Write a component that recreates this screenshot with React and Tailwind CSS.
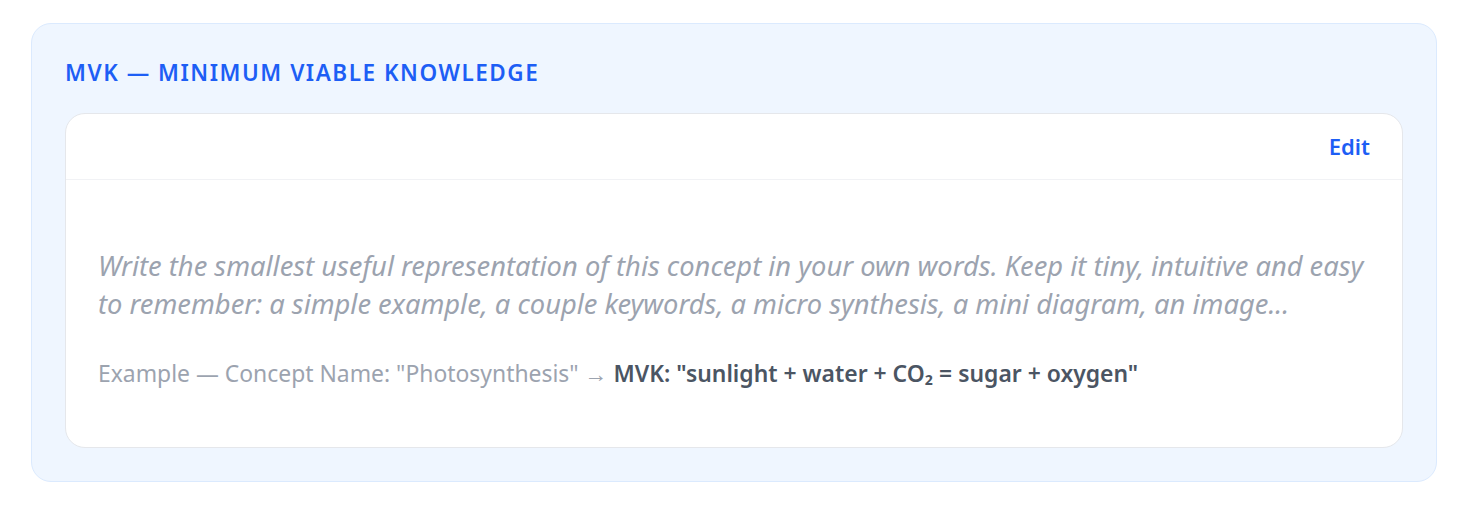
export default function App() {
  return (
    <div className="min-h-screen bg-white pl-[31px] pr-[29px] pt-[23px]" style={{ fontFamily: '"Noto Sans", "Open Sans", sans-serif' }}>
      <div className="rounded-[20px] border border-[#dbeafe] bg-[#eff6ff] px-[33px] pt-[32px] pb-[33px]">
        <h2 className="mb-[24px] text-[22.5px] font-semibold uppercase leading-[33px] tracking-[0.068em] text-[#1d5ef5]">
          MVK — Minimum Viable Knowledge
        </h2>
        <div className="rounded-[20px] border border-[#e5e7eb] bg-white">
          <div className="flex h-[66px] items-center justify-end border-b border-[#f1f2f5] px-[32px]">
            <button className="text-[22px] font-semibold text-[#1d5ef5]">Edit</button>
          </div>
          <div className="px-[32px] pt-[67px] pb-[58px]">
            <p className="text-[27.3px] italic leading-[38px] text-[#9ca3af]">
              Write the smallest useful representation of this concept in your own words. Keep it tiny, intuitive and easy to remember: a simple example, a couple keywords, a micro synthesis, a mini diagram, an image...
            </p>
            <p className="mt-[36px] text-[22.9px] leading-[30px] text-[#9ca3af]">
              Example — Concept Name: "Photosynthesis" → <span className="font-semibold text-[#4b5563]">MVK: "sunlight + water + CO₂ = sugar + oxygen"</span>
            </p>
          </div>
        </div>
      </div>
    </div>
  );
}
